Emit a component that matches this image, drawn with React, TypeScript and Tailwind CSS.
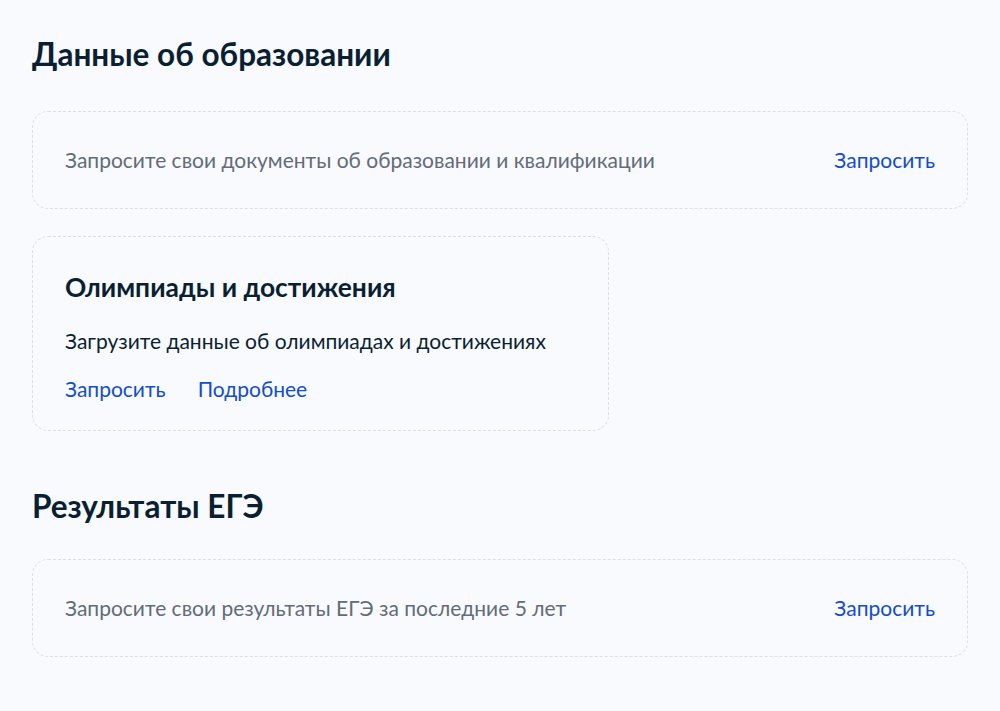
export default function App() {
  return (
    <div className="min-h-[711px] bg-[#f8fafd] px-8 pt-[34px] pb-10 font-['Lato','Noto_Sans',sans-serif] text-[#0b1f33]">
      <h2 className="text-[31.5px] font-bold leading-[40px]">Данные об образовании</h2>

      <div className="mt-[37px] flex items-center justify-between rounded-2xl border border-dashed border-[#dadfe7] px-8 py-[34px]">
        <span className="text-[21px] leading-7 text-[#636c78]">
          Запросите свои документы об образовании и квалификации
        </span>
        <a className="text-[21px] leading-7 text-[#144dcb]">Запросить</a>
      </div>

      <div className="mt-[27px] w-[577px] rounded-2xl border border-dashed border-[#dadfe7] px-8 pt-[33px] pb-[27px]">
        <h3 className="text-[26.4px] font-bold leading-[34px]">Олимпиады и достижения</h3>
        <p className="mt-[23px] text-[21px] leading-7">Загрузите данные об олимпиадах и достижениях</p>
        <div className="mt-[20px] flex gap-8 text-[21px] leading-7 text-[#144dcb]">
          <a>Запросить</a>
          <a>Подробнее</a>
        </div>
      </div>

      <h2 className="mt-[55px] text-[31.5px] font-bold leading-[40px]">Результаты ЕГЭ</h2>

      <div className="mt-[33px] flex items-center justify-between rounded-2xl border border-dashed border-[#dadfe7] px-8 py-[34px]">
        <span className="text-[21px] leading-7 text-[#636c78]">
          Запросите свои результаты ЕГЭ за последние 5 лет
        </span>
        <a className="text-[21px] leading-7 text-[#144dcb]">Запросить</a>
      </div>
    </div>
  );
}
